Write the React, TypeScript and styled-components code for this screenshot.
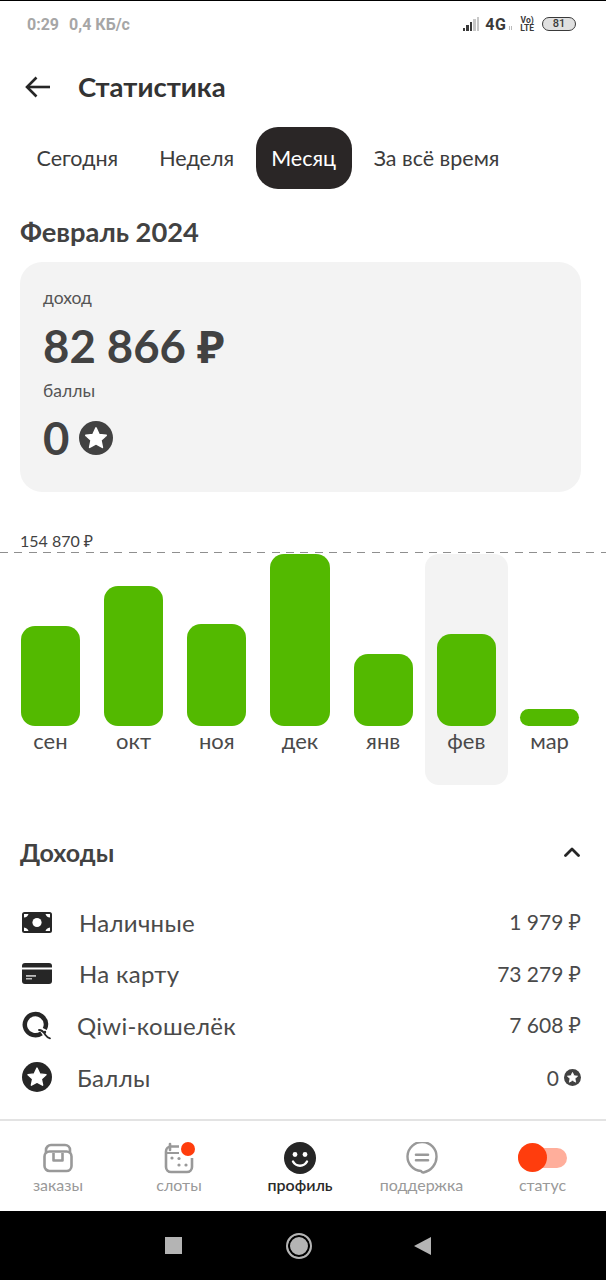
import React from 'react';
import styled, { createGlobalStyle } from 'styled-components';

const FONT = `Lato, "Noto Sans", "Open Sans", sans-serif`;

const GlobalStyle = createGlobalStyle`
  html, body {
    margin: 0;
    padding: 0;
    background: #fff;
  }
  * {
    box-sizing: border-box;
  }
`;

const months = [
  { label: 'сен', height: 100 },
  { label: 'окт', height: 140 },
  { label: 'ноя', height: 102 },
  { label: 'дек', height: 172 },
  { label: 'янв', height: 72 },
  { label: 'фев', height: 92, active: true },
  { label: 'мар', height: 17 },
];

const StarCoin = ({ size, color = '#424242' }: { size: number; color?: string }) => (
  <svg width={size} height={size} viewBox='0 0 32 32'>
    <circle cx='16' cy='16' r='16' fill={color} />
    <path
      d='M16 6.5l2.9 6.2 6.7.8-5 4.6 1.4 6.7-6-3.4-6 3.4 1.4-6.7-5-4.6 6.7-.8z'
      fill='#fff'
      stroke='#fff'
      strokeWidth='1.5'
      strokeLinejoin='round'
    />
  </svg>
);

const BackIcon = () => (
  <svg width='26' height='22' viewBox='0 0 26 22' fill='none' stroke='#262626' strokeWidth='2.6'>
    <path d='M25 11H2.5' />
    <path d='M11.5 1.5L2 11l9.5 9.5' />
  </svg>
);

const ChevronIcon = () => (
  <svg width='16' height='10' viewBox='0 0 16 10' fill='none' stroke='#262626' strokeWidth='2.8'>
    <path d='M1.5 8.5L8 2l6.5 6.5' strokeLinecap='round' strokeLinejoin='round' />
  </svg>
);

const CashIcon = () => (
  <svg width='30' height='21' viewBox='0 0 30 21'>
    <rect x='0' y='0' width='30' height='21' rx='2.5' fill='#262626' />
    <path d='M2 2h4.5C6 4 4.5 5.2 2 5.6zM28 2h-4.5c.5 2 2 3.2 4.5 3.6zM2 19h4.5C6 17 4.5 15.8 2 15.4zM28 19h-4.5c.5-2 2-3.2 4.5-3.6z' fill='#fff' />
    <circle cx='15' cy='10.5' r='4.6' fill='#fff' />
  </svg>
);

const CardIcon = () => (
  <svg width='30' height='21' viewBox='0 0 30 21'>
    <rect x='0' y='0' width='30' height='21' rx='3' fill='#262626' />
    <rect x='0' y='4.5' width='30' height='2' fill='#fff' />
    <rect x='4' y='12' width='10' height='1.8' fill='#bbb' />
    <rect x='4' y='15' width='6' height='1.5' fill='#bbb' />
  </svg>
);

const QiwiIcon = () => (
  <svg width='30' height='30' viewBox='0 0 30 30' fill='none'>
    <path d='M19.5 23.4A10.6 10.6 0 1 1 24 14c0 2-.4 3.5-1.2 5' stroke='#262626' strokeWidth='4.5' />
    <path d='M17 20c2.5 0 4.5 1.5 6.5 5 1 1.5 2.5 2.8 4.5 3.3' stroke='#262626' strokeWidth='1.8' strokeLinecap='round' />
    <circle cx='23' cy='22' r='1.2' fill='#262626' />
  </svg>
);

const OrdersIcon = () => (
  <svg width='30' height='30' viewBox='0 0 30 30' fill='none' stroke='#999' strokeWidth='2.6'>
    <path d='M3 10.5V7a5 5 0 0 1 5-5h14a5 5 0 0 1 5 5v3.5' />
    <rect x='1.5' y='8.5' width='27' height='19.5' rx='5' />
    <path d='M10.5 10v7.5h9V10' strokeLinejoin='round' />
  </svg>
);

const SlotsIcon = () => (
  <svg width='30' height='32' viewBox='0 0 30 32' fill='none'>
    <path d='M15 4.5H7a5 5 0 0 0-5 5V25a5 5 0 0 0 5 5h16a5 5 0 0 0 5-5v-9' stroke='#999' strokeWidth='2.6' />
    <path d='M6 2v6' stroke='#999' strokeWidth='2.6' strokeLinecap='round' />
    <path d='M3 11h12' stroke='#999' strokeWidth='2' />
    <g fill='#999'>
      <circle cx='8' cy='16' r='1.6' />
      <circle cx='15' cy='16.5' r='1.6' />
      <circle cx='15' cy='23' r='1.6' />
      <circle cx='22' cy='23' r='1.6' />
    </g>
  </svg>
);

const ProfileIcon = () => (
  <svg width='32' height='32' viewBox='0 0 32 32'>
    <circle cx='16' cy='16' r='16' fill='#262626' />
    <circle cx='11' cy='12.5' r='2.4' fill='#fff' />
    <circle cx='21' cy='12.5' r='2.4' fill='#fff' />
    <path d='M9 19.5c1.5 2.8 4 4.2 7 4.2s5.5-1.4 7-4.2' fill='none' stroke='#fff' strokeWidth='2.4' strokeLinecap='round' />
  </svg>
);

const SupportIcon = () => (
  <svg width='32' height='32' viewBox='0 0 32 32' fill='none' stroke='#999' strokeWidth='2.4'>
    <path d='M17.5 30.5c-1 .3-1.5 0-2.5-1.5A14.500 14.500 0 1 1 30.500 15c0 7-5 13.500-13 15.500z' strokeLinejoin='round' />
    <path d='M10 12.700h12M10 18.300h12' strokeWidth='2.6' strokeLinecap='round' />
  </svg>
);

const Page = styled.div`
  width: 606px;
  height: 1280px;
  display: flex;
  flex-direction: column;
  overflow: hidden;
  background: #fff;
  font-family: ${FONT};
  color: #424242;
`;

const StatusBar = styled.div`
  height: 49px;
  padding: 0 30px 2px 27px;
  border-top: 1px solid #000;
  display: flex;
  align-items: center;
  justify-content: space-between;
  font-family: Roboto, sans-serif;
  font-weight: 700;
  font-size: 16px;
  color: #a6a6a6;
`;

const StatusTime = styled.div`
  display: flex;
  gap: 10px;
`;

const StatusRight = styled.div`
  display: flex;
  align-items: center;
  color: #3a3a3a;
`;

const SignalBars = styled.div`
  display: flex;
  align-items: flex-end;
  gap: 1px;
  height: 14px;
  margin-right: 6px;
`;

const SignalBar = styled.span<{ $h: number; $on: boolean }>`
  width: 2.5px;
  height: ${({ $h }) => $h}px;
  background: ${({ $on }) => ($on ? '#3a3a3a' : '#c8c8c8')};
`;

const NetworkLabel = styled.span`
  font-size: 16px;
  letter-spacing: 0.5px;
`;

const NetworkArrows = styled.span`
  width: 3px;
  height: 4px;
  margin: 8px 0 0 3px;
  border-left: 1px solid #bbb;
  border-right: 1px solid #bbb;
`;

const VolteLabel = styled.span`
  margin-left: 8px;
  font-size: 8.5px;
  line-height: 8px;
  text-align: center;
`;

const Battery = styled.span`
  width: 34px;
  height: 14px;
  margin-left: 8px;
  border: 1.5px solid #3a3a3a;
  border-radius: 7px;
  background: #e0e0e0;
  font-size: 11px;
  font-weight: 500;
  line-height: 11px;
  text-align: center;
`;

const Header = styled.div`
  height: 78px;
  padding: 0 0 3px 25px;
  display: flex;
  align-items: center;
  gap: 27px;
`;

const HeaderTitle = styled.h1`
  margin: 0;
  font-size: 27.5px;
  font-weight: 700;
  color: #333;
`;

const Tabs = styled.div`
  height: 62px;
  padding-left: 16px;
  display: flex;
`;

const Tab = styled.div<{ $active?: boolean }>`
  width: ${({ $active }) => ($active ? '96px' : 'auto')};
  padding: 0 20.5px;
  margin: ${({ $active }) => ($active ? '0 1.5px 0 1px' : '0')};
  border-radius: 22px;
  display: flex;
  align-items: center;
  justify-content: center;
  font-size: 21.5px;
  background: ${({ $active }) => ($active ? '#2a2626' : 'transparent')};
  color: ${({ $active }) => ($active ? '#fff' : '#3c3c3c')};
`;

const Period = styled.h2`
  margin: 28px 0 15px 20px;
  font-size: 27.3px;
  line-height: 30px;
  font-weight: 700;
`;

const SummaryCard = styled.div`
  width: 561px;
  height: 230px;
  margin-left: 20px;
  padding: 26px 23px;
  border-radius: 22px;
  background: #f3f3f3;
`;

const SummaryLabel = styled.div`
  font-size: 17.5px;
  line-height: 20px;
  color: #555;
`;

const SummaryValue = styled.div`
  height: 73px;
  display: flex;
  align-items: center;
  gap: 10px;
  font-size: 45.5px;
  font-weight: 700;
`;

const MaxLabel = styled.div`
  margin: 38px 0 0 20px;
  font-size: 16px;
  line-height: 22px;
`;

const Dashed = styled.div`
  height: 1px;
  background: repeating-linear-gradient(to right, #8f8f8f 0 8px, transparent 8px 14.3px);
`;

const Chart = styled.div`
  margin: 1px 0 0 8.8px;
  display: grid;
  grid-template-columns: repeat(7, 83.2px);
`;

const ChartColumn = styled.div<{ $active?: boolean }>`
  height: 231px;
  padding: 0 12px;
  border-radius: 14px;
  display: flex;
  flex-direction: column;
  align-items: center;
  background: ${({ $active }) => ($active ? '#f3f3f3' : 'transparent')};
`;

const BarSlot = styled.div`
  width: 100%;
  height: 172px;
  display: flex;
  align-items: flex-end;
`;

const Bar = styled.div`
  width: 100%;
  border-radius: 14px;
  background: #53b900;
`;

const BarLabel = styled.div`
  margin-top: 3px;
  font-size: 22px;
  line-height: 24px;
  color: #4a4a4a;
`;

const SectionHeader = styled.div`
  margin-top: 49px;
  padding: 0 26px 0 20px;
  height: 36px;
  display: flex;
  align-items: center;
  justify-content: space-between;
`;

const SectionTitle = styled.h3`
  margin: 0;
  font-size: 25px;
  font-weight: 700;
`;

const IncomeList = styled.div`
  flex: 1;
  margin-top: 26.5px;
  padding: 0 25px 0 22px;
`;

const IncomeRow = styled.div`
  height: 51.6px;
  display: flex;
  align-items: center;
  font-size: 24px;
  letter-spacing: 0.3px;
  color: #4a4a4a;
`;

const IncomeIcon = styled.div<{ $width: number }>`
  width: ${({ $width }) => $width}px;
  display: flex;
`;

const IncomeAmount = styled.div`
  margin-left: auto;
  display: flex;
  align-items: center;
  gap: 5px;
  font-size: 21px;
  letter-spacing: 0;
`;

const BottomNav = styled.nav`
  height: 92px;
  padding-top: 19px;
  border-top: 2px solid #e3e3e3;
  display: grid;
  grid-template-columns: 116px 126px 116px 127px 115px;
`;

const NavItem = styled.div<{ $active?: boolean }>`
  display: flex;
  flex-direction: column;
  align-items: center;
  font-size: 16px;
  line-height: 18px;
  color: ${({ $active }) => ($active ? '#2a2a2a' : '#999')};
  font-weight: ${({ $active }) => ($active ? 600 : 400)};
`;

const NavIconBox = styled.div`
  position: relative;
  height: 36px;
  display: flex;
  align-items: center;
  justify-content: center;
`;

const Badge = styled.span`
  position: absolute;
  top: 2px;
  right: -1px;
  width: 14px;
  height: 14px;
  border-radius: 50%;
  background: #ff3d0d;
`;

const ToggleTrack = styled.div`
  position: relative;
  width: 49px;
  height: 20px;
  border-radius: 10px;
  background: #ffae9b;
`;

const ToggleKnob = styled.span`
  position: absolute;
  top: -5px;
  left: 0;
  width: 29px;
  height: 29px;
  border-radius: 50%;
  background: #ff3d0d;
`;

const SystemBar = styled.div`
  height: 69px;
  padding-left: 165px;
  background: #000;
  display: flex;
  align-items: center;
`;

const SystemSquare = styled.span`
  width: 17px;
  height: 17px;
  margin-right: 104px;
  background: #b4b4b4;
`;

const SystemCircle = styled.span`
  width: 26px;
  height: 26px;
  margin-right: 102px;
  border: 2px solid #b4b4b4;
  border-radius: 50%;
  background: #b4b4b4;
  box-shadow: inset 0 0 0 2px #000;
`;

const SystemBack = styled.span`
  width: 0;
  height: 0;
  border-top: 9.5px solid transparent;
  border-bottom: 9.5px solid transparent;
  border-right: 17px solid #b4b4b4;
`;

export default function App() {
  return (
    <Page>
      <GlobalStyle />
      <StatusBar>
        <StatusTime>
          <span>0:29</span>
          <span>0,4 КБ/с</span>
        </StatusTime>
        <StatusRight>
          <SignalBars>
            {[3, 6, 9, 12, 14].map((h, i) => (
              <SignalBar key={h} $h={h} $on={i < 3} />
            ))}
          </SignalBars>
          <NetworkLabel>4G</NetworkLabel>
          <NetworkArrows />
          <VolteLabel>
            Vo)
            <br />
            LTE
          </VolteLabel>
          <Battery>81</Battery>
        </StatusRight>
      </StatusBar>
      <Header>
        <BackIcon />
        <HeaderTitle>Статистика</HeaderTitle>
      </Header>
      <Tabs>
        <Tab>Сегодня</Tab>
        <Tab>Неделя</Tab>
        <Tab $active>Месяц</Tab>
        <Tab>За всё время</Tab>
      </Tabs>
      <Period>Февраль 2024</Period>
      <SummaryCard>
        <SummaryLabel>доход</SummaryLabel>
        <SummaryValue>82 866 ₽</SummaryValue>
        <SummaryLabel>баллы</SummaryLabel>
        <SummaryValue>
          0 <StarCoin size={34} />
        </SummaryValue>
      </SummaryCard>
      <MaxLabel>154 870 ₽</MaxLabel>
      <Dashed />
      <Chart>
        {months.map(month => (
          <ChartColumn key={month.label} $active={month.active}>
            <BarSlot>
              <Bar style={{ height: month.height }} />
            </BarSlot>
            <BarLabel>{month.label}</BarLabel>
          </ChartColumn>
        ))}
      </Chart>
      <SectionHeader>
        <SectionTitle>Доходы</SectionTitle>
        <ChevronIcon />
      </SectionHeader>
      <IncomeList>
        <IncomeRow>
          <IncomeIcon $width={57}>
            <CashIcon />
          </IncomeIcon>
          Наличные
          <IncomeAmount>1 979 ₽</IncomeAmount>
        </IncomeRow>
        <IncomeRow>
          <IncomeIcon $width={57}>
            <CardIcon />
          </IncomeIcon>
          На карту
          <IncomeAmount>73 279 ₽</IncomeAmount>
        </IncomeRow>
        <IncomeRow>
          <IncomeIcon $width={55}>
            <QiwiIcon />
          </IncomeIcon>
          Qiwi-кошелёк
          <IncomeAmount>7 608 ₽</IncomeAmount>
        </IncomeRow>
        <IncomeRow>
          <IncomeIcon $width={55}>
            <StarCoin size={30} color='#262626' />
          </IncomeIcon>
          Баллы
          <IncomeAmount>
            0 <StarCoin size={17} />
          </IncomeAmount>
        </IncomeRow>
      </IncomeList>
      <BottomNav>
        <NavItem>
          <NavIconBox>
            <OrdersIcon />
          </NavIconBox>
          заказы
        </NavItem>
        <NavItem>
          <NavIconBox>
            <SlotsIcon />
            <Badge />
          </NavIconBox>
          слоты
        </NavItem>
        <NavItem $active>
          <NavIconBox>
            <ProfileIcon />
          </NavIconBox>
          профиль
        </NavItem>
        <NavItem>
          <NavIconBox>
            <SupportIcon />
          </NavIconBox>
          поддержка
        </NavItem>
        <NavItem>
          <NavIconBox>
            <ToggleTrack>
              <ToggleKnob />
            </ToggleTrack>
          </NavIconBox>
          статус
        </NavItem>
      </BottomNav>
      <SystemBar>
        <SystemSquare />
        <SystemCircle />
        <SystemBack />
      </SystemBar>
    </Page>
  );
}
